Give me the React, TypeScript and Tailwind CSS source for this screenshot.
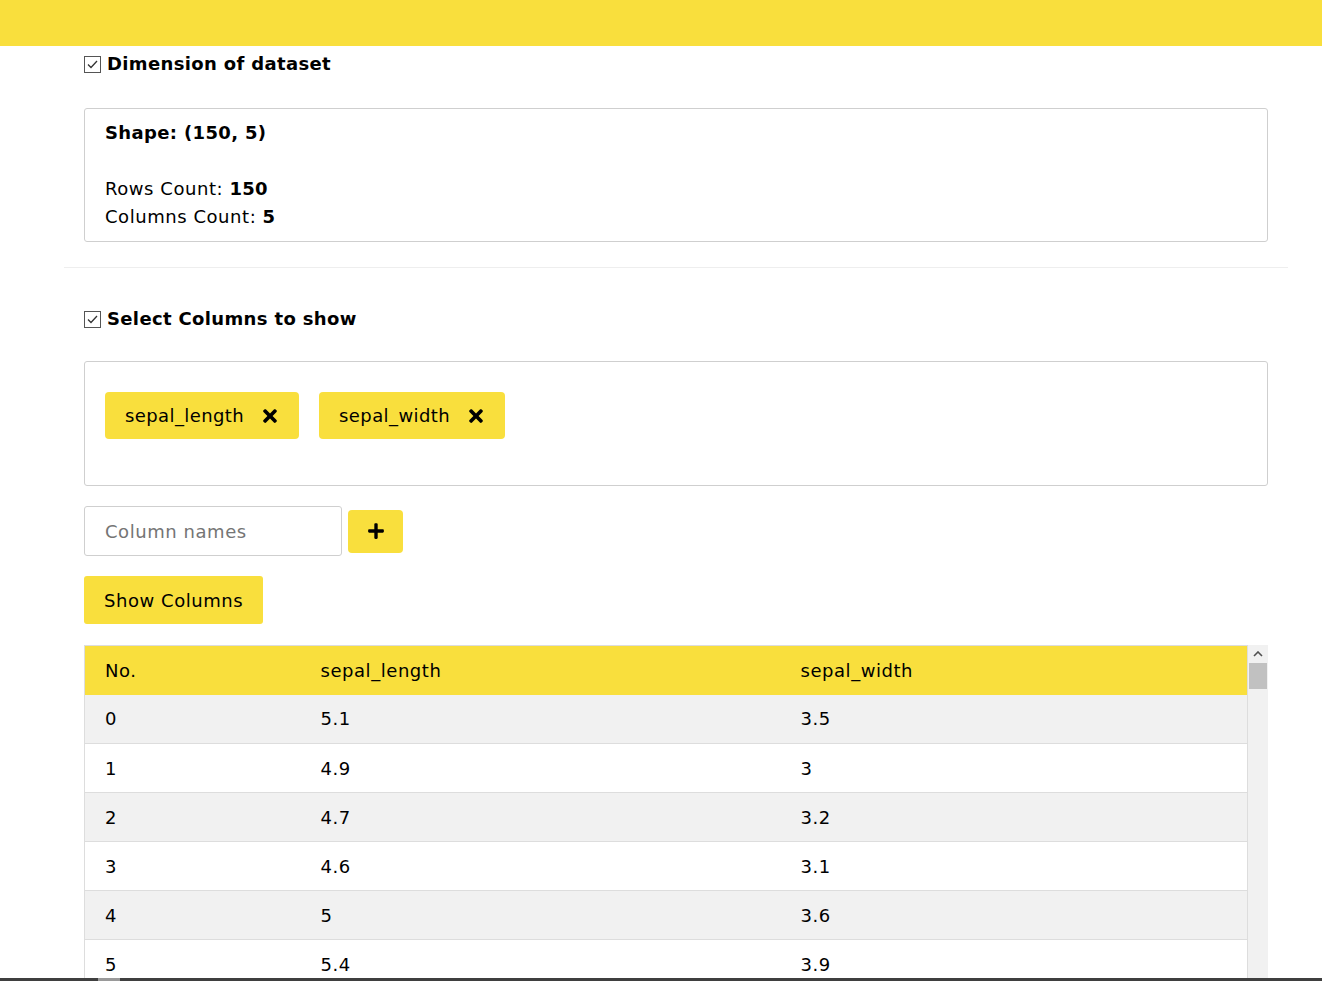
import React from 'react';
import { FaTimes, FaPlus } from 'react-icons/fa';

const YELLOW = 'bg-[#f9df3d]';

const rows: [number, string, string][] = [
  [0, '5.1', '3.5'],
  [1, '4.9', '3'],
  [2, '4.7', '3.2'],
  [3, '4.6', '3.1'],
  [4, '5', '3.6'],
  [5, '5.4', '3.9'],
  [6, '4.6', '3.4'],
  [7, '5', '3.4'],
  [8, '4.4', '2.9'],
  [9, '4.9', '3.1'],
];

// checked checkbox glyph
const CheckBox = () => (
  <svg width="17" height="17" viewBox="0 0 17 17" className="shrink-0">
    <rect x="0.5" y="0.5" width="16" height="16" fill="#fff" stroke="#555" strokeWidth="1" />
    <path d="M4 8.5 L7 11.5 L13 5" stroke="#333" strokeWidth="1.3" fill="none" />
  </svg>
);

const SectionTitle = ({ label }: { label: string }) => (
  <div className="flex items-center gap-[6px] h-[28px]">
    <CheckBox />
    <span className="font-bold text-[18px] leading-[28px] tracking-[0.35px]">{label}</span>
  </div>
);

const Chip = ({ label }: { label: string }) => (
  <div className={`flex items-center gap-[16px] h-[47px] pl-[20px] pr-[19px] rounded-[4px] ${YELLOW}`}>
    <span className="text-[18px] tracking-[0.4px]">{label}</span>
    <FaTimes size={20} />
  </div>
);

export default function App() {
  return (
    <div className="min-h-screen bg-white text-black tracking-[0.55px] font-['DejaVu_Sans',Verdana,sans-serif]">
      <div className={`h-[46px] ${YELLOW}`} />

      <div className="ml-[64px] w-[1224px]">
        {/* Dimension of dataset */}
        <div className="px-[20px] pt-[4px]">
          <SectionTitle label="Dimension of dataset" />
          <div className="mt-[30px] border border-[#cfcfcf] rounded-[3px] px-[20px] py-[10px] text-[18px] leading-[28px]">
            <div className="font-bold tracking-[0.35px]">Shape: (150, 5)</div>
            <div className="h-[28px]" />
            <div>
              Rows Count: <span className="font-bold tracking-[0.35px]">150</span>
            </div>
            <div>
              Columns Count: <span className="font-bold tracking-[0.35px]">5</span>
            </div>
          </div>
        </div>

        <div className="mt-[25px] h-px bg-[#eeeeee]" />

        {/* Select Columns */}
        <div className="px-[20px] mt-[37px]">
          <SectionTitle label="Select Columns to show" />
          <div className="mt-[28px] h-[125px] border border-[#cfcfcf] rounded-[3px] px-[20px] pt-[30px] flex items-start gap-[20px]">
            <Chip label="sepal_length" />
            <Chip label="sepal_width" />
          </div>

          <div className="mt-[20px] flex items-center gap-[6px]">
            <div className="w-[258px] h-[50px] border border-[#cfcfcf] rounded-[3px] px-[20px] flex items-center text-[18px] text-[#757575]">
              Column names
            </div>
            <button className={`w-[55px] h-[43px] rounded-[4px] flex items-center justify-center ${YELLOW}`}>
              <FaPlus size={18} />
            </button>
          </div>

          <button className={`mt-[20px] h-[48px] px-[20px] rounded-[3px] text-[18px] ${YELLOW}`}>
            Show Columns
          </button>

          <div className="mt-[21px] flex">
            <table className="w-[1164px] border-collapse border border-[#dddddd] text-[18px] text-left">
              <thead>
                <tr className={`h-[49px] ${YELLOW}`}>
                  <th className="font-normal pl-[20px] w-[216px]">No.</th>
                  <th className="font-normal pl-[20px] w-[480px]">sepal_length</th>
                  <th className="font-normal pl-[20px]">sepal_width</th>
                </tr>
              </thead>
              <tbody>
                {rows.map(([i, a, b]) => (
                  <tr
                    key={i}
                    className={`h-[49px] border-b border-[#dddddd] ${i % 2 === 0 ? 'bg-[#f1f1f1]' : 'bg-white'}`}
                  >
                    <td className="pl-[20px]">{i}</td>
                    <td className="pl-[20px]">{a}</td>
                    <td className="pl-[20px]">{b}</td>
                  </tr>
                ))}
              </tbody>
            </table>
            {/* scrollbar */}
            <div className="w-[20px] bg-[#f1f1f1] flex flex-col">
              <div className="h-[18px] flex items-center justify-center">
                <svg width="10" height="6" viewBox="0 0 10 6">
                  <path d="M1 5 L5 1 L9 5" stroke="#505050" strokeWidth="1.6" fill="none" />
                </svg>
              </div>
              <div className="h-[26px] mx-[1px] bg-[#c1c1c1]" />
            </div>
          </div>
        </div>
      </div>

      <div className="fixed bottom-0 left-0 right-0 h-[3px] bg-[#3f3f3f]">
        <div className="ml-[98px] w-[22px] h-full bg-[#9a9a9a]" />
      </div>
    </div>
  );
}
